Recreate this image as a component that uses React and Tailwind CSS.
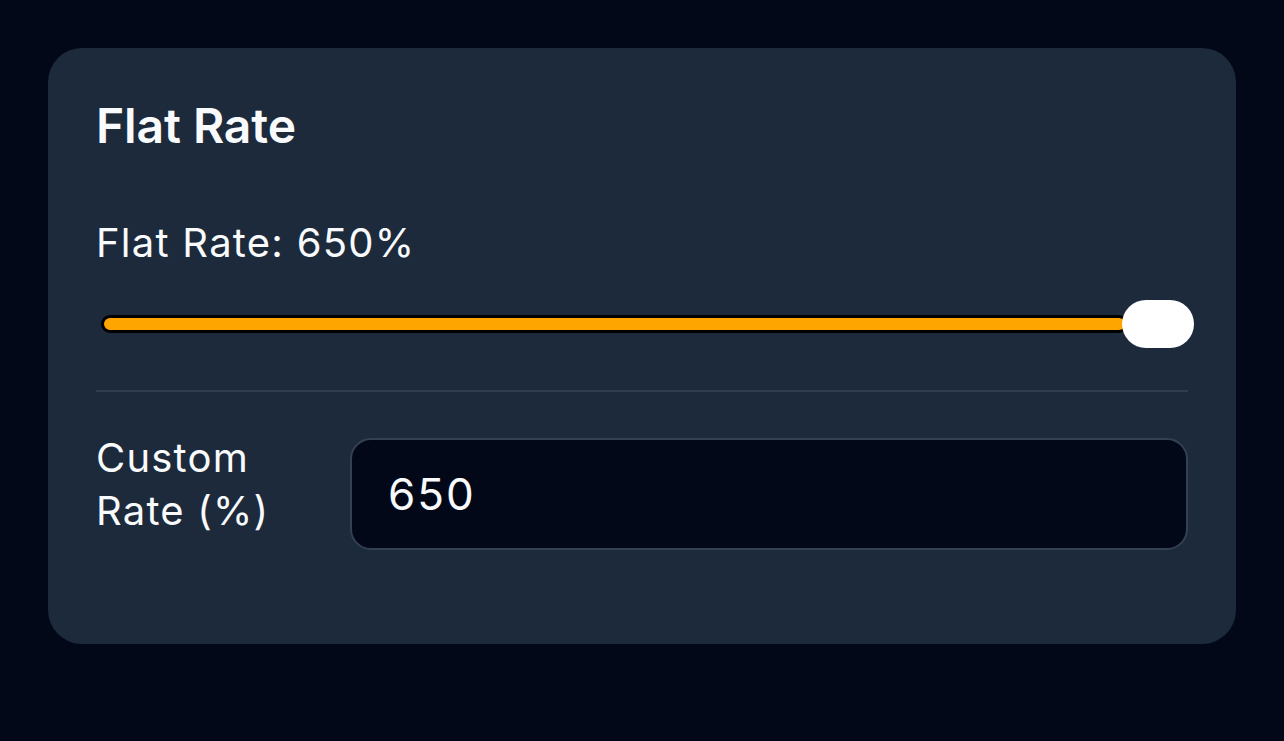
export default function App() {
  return (
    <div
      className="min-h-[741px] w-full bg-[#020817] pt-[48px] pl-[48px]"
      style={{ fontFamily: "Inter, 'Noto Sans', sans-serif" }}
    >
      <div className="w-[1188px] h-[596px] rounded-[34px] bg-[#1c2a3b] px-[48px] pt-[49px]">
        <h2 className="text-[48px] leading-[58px] font-semibold text-[#f8fafc] tracking-[-0.1px]">
          Flat Rate
        </h2>
        <div className="mt-[64px] text-[40px] leading-[48px] tracking-[1.25px] text-[#f8fafc]">
          Flat Rate: 650%
        </div>
        <div className="relative mt-[33px] h-[48px] w-full">
          <div className="absolute left-[5px] right-[60px] top-[15px] h-[18px] rounded-full border-[3px] border-black bg-[#ffa500]" />
          <div className="absolute left-[1026px] top-0 h-[48px] w-[72px] rounded-full bg-white" />
        </div>
        <div className="mt-[42px] h-[2px] w-full bg-[#2f3d4f]" />
        <div className="mt-[39px] flex items-start gap-[32px]">
          <label className="w-[222px] shrink-0 text-[40px] leading-[53px] tracking-[1.2px] text-[#f8fafc]">
            Custom Rate (%)
          </label>
          <div className="mt-[7px] flex h-[112px] flex-1 items-center rounded-[21px] border-2 border-[#334155] bg-[#020817] px-[36px] text-[44px] tracking-[2px] text-[#f8fafc]">
            650
          </div>
        </div>
      </div>
    </div>
  );
}
